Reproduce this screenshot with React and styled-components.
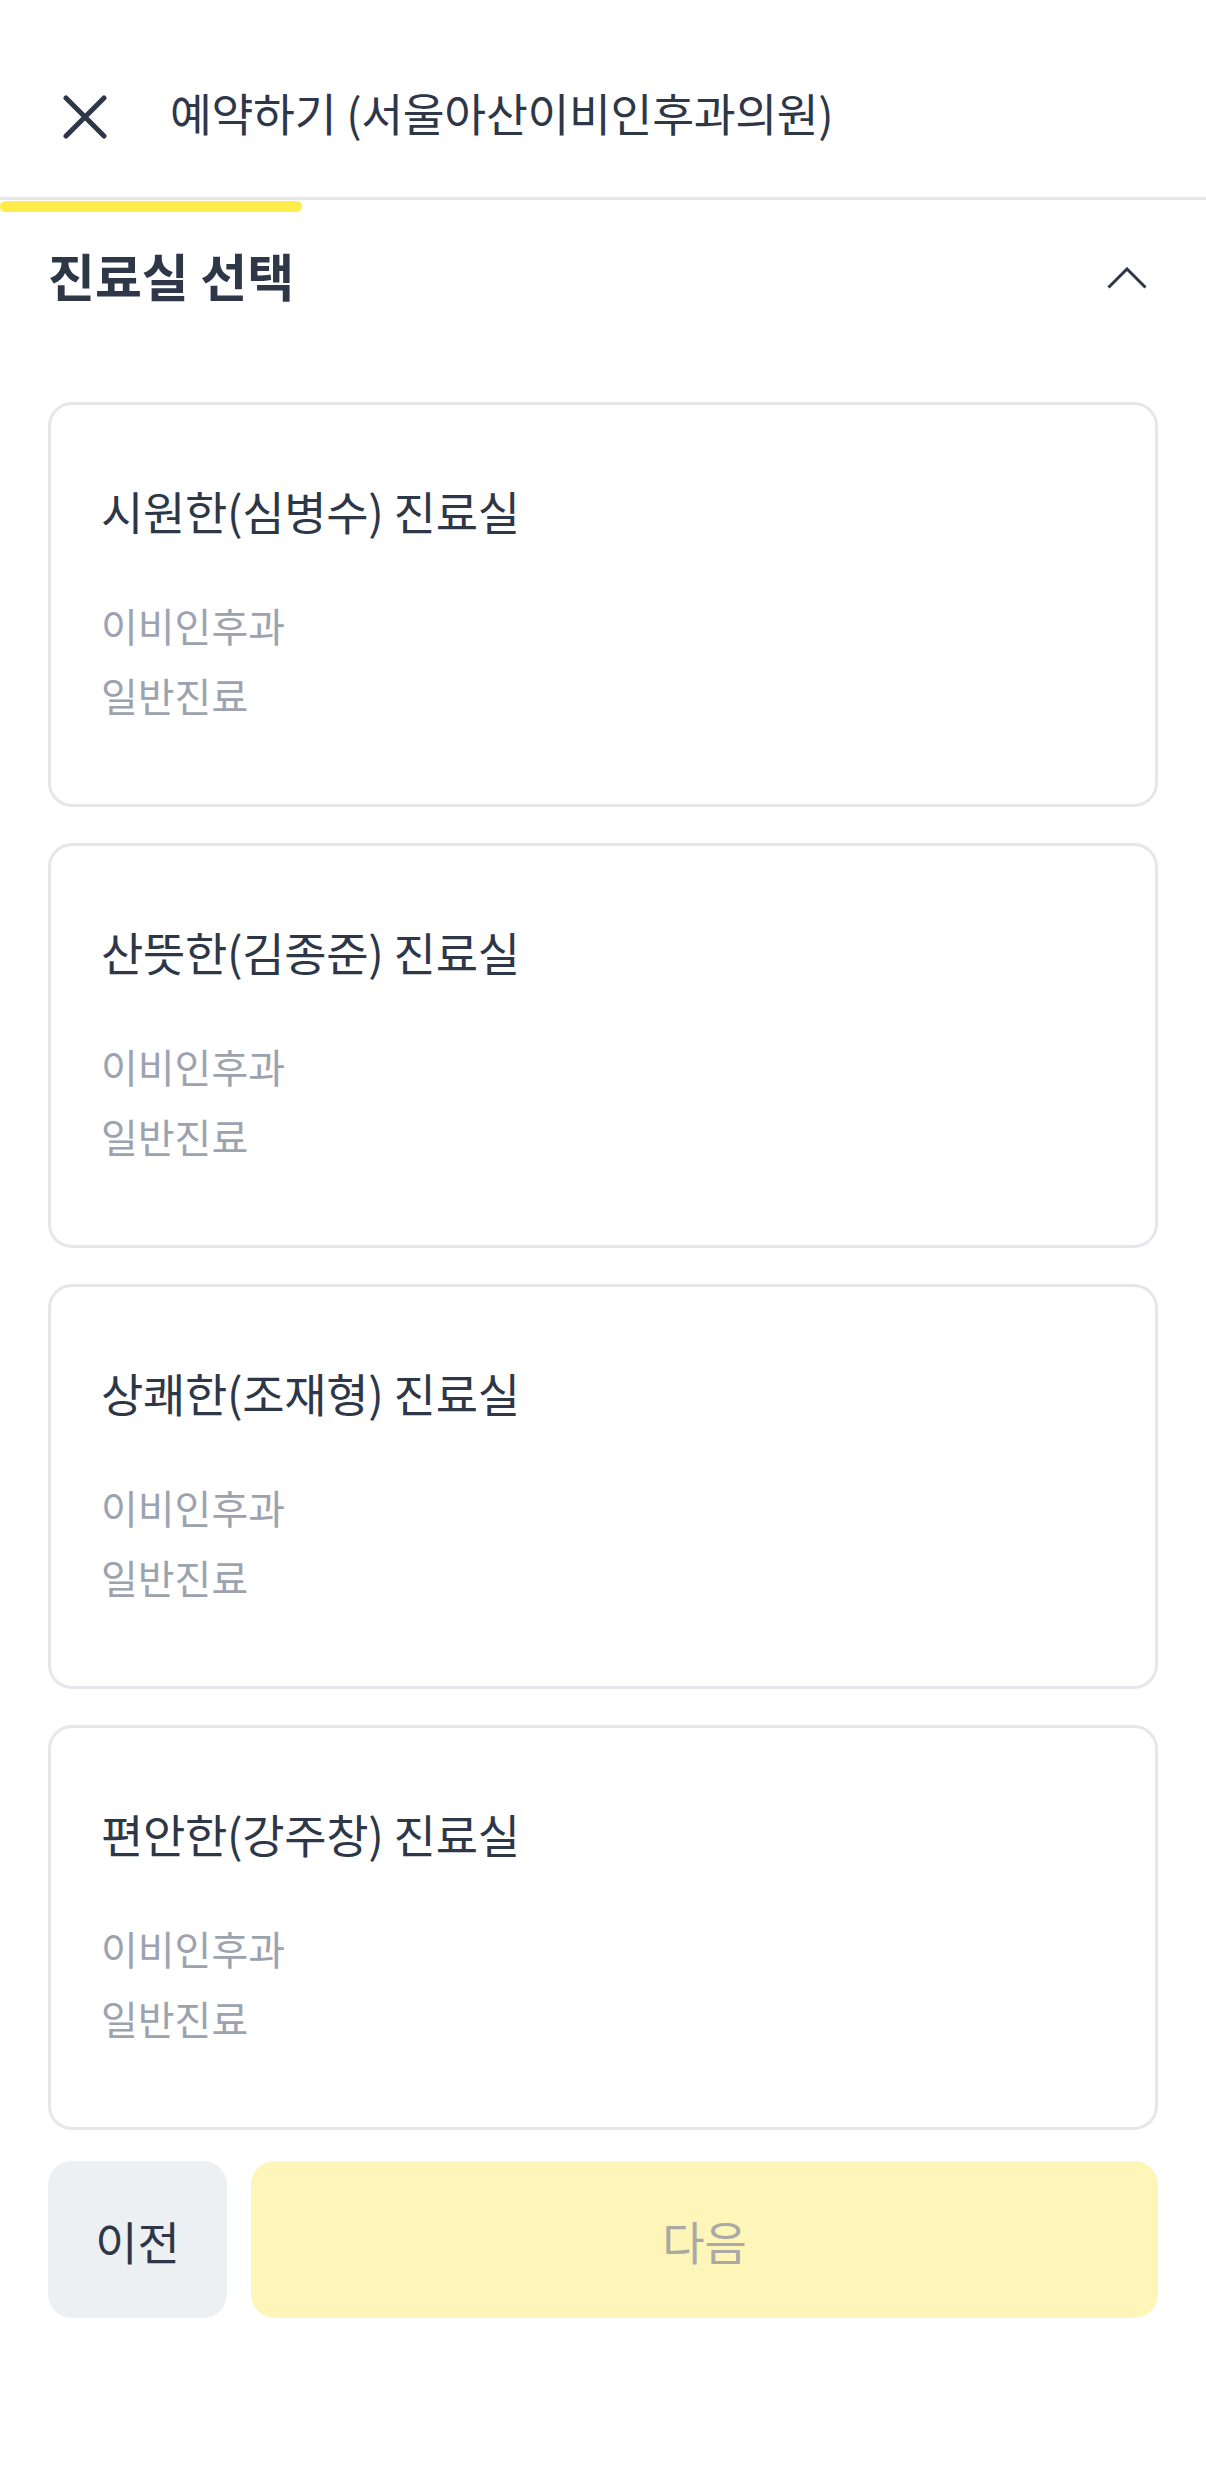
import React from 'react';
import styled, { createGlobalStyle } from 'styled-components';

const GlobalStyle = createGlobalStyle`
    * {
        box-sizing: border-box;
    }
    body {
        margin: 0;
        background: #fff;
        font-family: "Noto Sans CJK KR", "Noto Sans", sans-serif;
        color: #2d3748;
    }
`;

const Page = styled.div`
    width: 1206px;
    min-height: 2469px;
    background: #fff;
`;

const Header = styled.header`
    display: flex;
    align-items: center;
    height: 197px;
    padding: 36px 48px 0 63px;
    gap: 63px;
`;

const CloseButton = styled.button`
    display: flex;
    align-items: center;
    justify-content: center;
    width: 44px;
    height: 44px;
    padding: 0;
    border: 0;
    background: transparent;
    color: #2d3748;
    cursor: pointer;
`;

const Title = styled.h1`
    margin: 0 0 10px;
    font-size: 45.5px;
    font-weight: 400;
    letter-spacing: -0.3px;
    line-height: 60px;
    color: #2d3748;
`;

const Track = styled.div`
    height: 15px;
    border-top: 3px solid #e6e6e6;
    padding-top: 1px;
`;

const Progress = styled.div`
    height: 11px;
    border-radius: 6px;
    background: #ffec4a;
`;

const SectionHead = styled.div`
    display: flex;
    align-items: center;
    justify-content: space-between;
    height: 126px;
    padding: 0 59px 0 48px;
`;

const SectionTitle = styled.h2`
    margin: 0;
    font-size: 51px;
    line-height: 70px;
    font-weight: 700;
    letter-spacing: 0;
    color: #2d3748;
`;

const Toggle = styled.button`
    display: flex;
    margin-top: 6px;
    padding: 0;
    border: 0;
    background: transparent;
    color: #2d3748;
    cursor: pointer;
`;

const List = styled.div`
    display: flex;
    flex-direction: column;
    gap: 36px;
    padding: 64px 48px 0;
`;

const Card = styled.div`
    border: 3px solid #e5e7eb;
    border-radius: 24px;
    padding: 75px 50px 74px;
    background: #fff;
    cursor: pointer;
`;

const RoomName = styled.div`
    font-size: 46px;
    line-height: 60px;
    margin-bottom: 50px;
    letter-spacing: -0.3px;
    color: #2d3748;
`;

const Meta = styled.div`
    font-size: 40px;
    line-height: 70px;
    color: #9ca3af;
`;

const Footer = styled.div`
    display: flex;
    gap: 24px;
    padding: 31px 48px 0;
`;

const ActionButton = styled.button`
    flex: ${props => props.primary ? '1' : '0 0 179px'};
    height: 157px;
    border: 0;
    border-radius: 24px;
    font-family: inherit;
    font-size: 46px;
    background: ${props => props.primary ? '#fef6b8' : '#edf0f3'};
    color: ${props => props.primary ? '#a9aaa5' : '#2d3748'};
    cursor: pointer;
`;

const rooms = [
    '시원한(심병수) 진료실',
    '산뜻한(김종준) 진료실',
    '상쾌한(조재형) 진료실',
    '편안한(강주창) 진료실',
];

export default function App() {
    return (
        <Page>
            <GlobalStyle />
            <Header>
                <CloseButton aria-label="닫기">
                    <svg width="44" height="44" viewBox="0 0 44 44" fill="none">
                        <path d="M3 3L41 41M41 3L3 41" stroke="currentColor" strokeWidth="5" strokeLinecap="round" />
                    </svg>
                </CloseButton>
                <Title>예약하기 (서울아산이비인후과의원)</Title>
            </Header>
            <Track>
                <Progress style={{ width: '302px' }} />
            </Track>
            <SectionHead>
                <SectionTitle>진료실 선택</SectionTitle>
                <Toggle aria-label="접기">
                    <svg width="40" height="22" viewBox="0 0 40 22" fill="none">
                        <path d="M1.5 20.5L20 2L38.5 20.5" stroke="currentColor" strokeWidth="3" />
                    </svg>
                </Toggle>
            </SectionHead>
            <List>
                {rooms.map(name => (
                    <Card key={name}>
                        <RoomName>{name}</RoomName>
                        <Meta>이비인후과</Meta>
                        <Meta>일반진료</Meta>
                    </Card>
                ))}
            </List>
            <Footer>
                <ActionButton>이전</ActionButton>
                <ActionButton primary disabled>다음</ActionButton>
            </Footer>
        </Page>
    );
}
